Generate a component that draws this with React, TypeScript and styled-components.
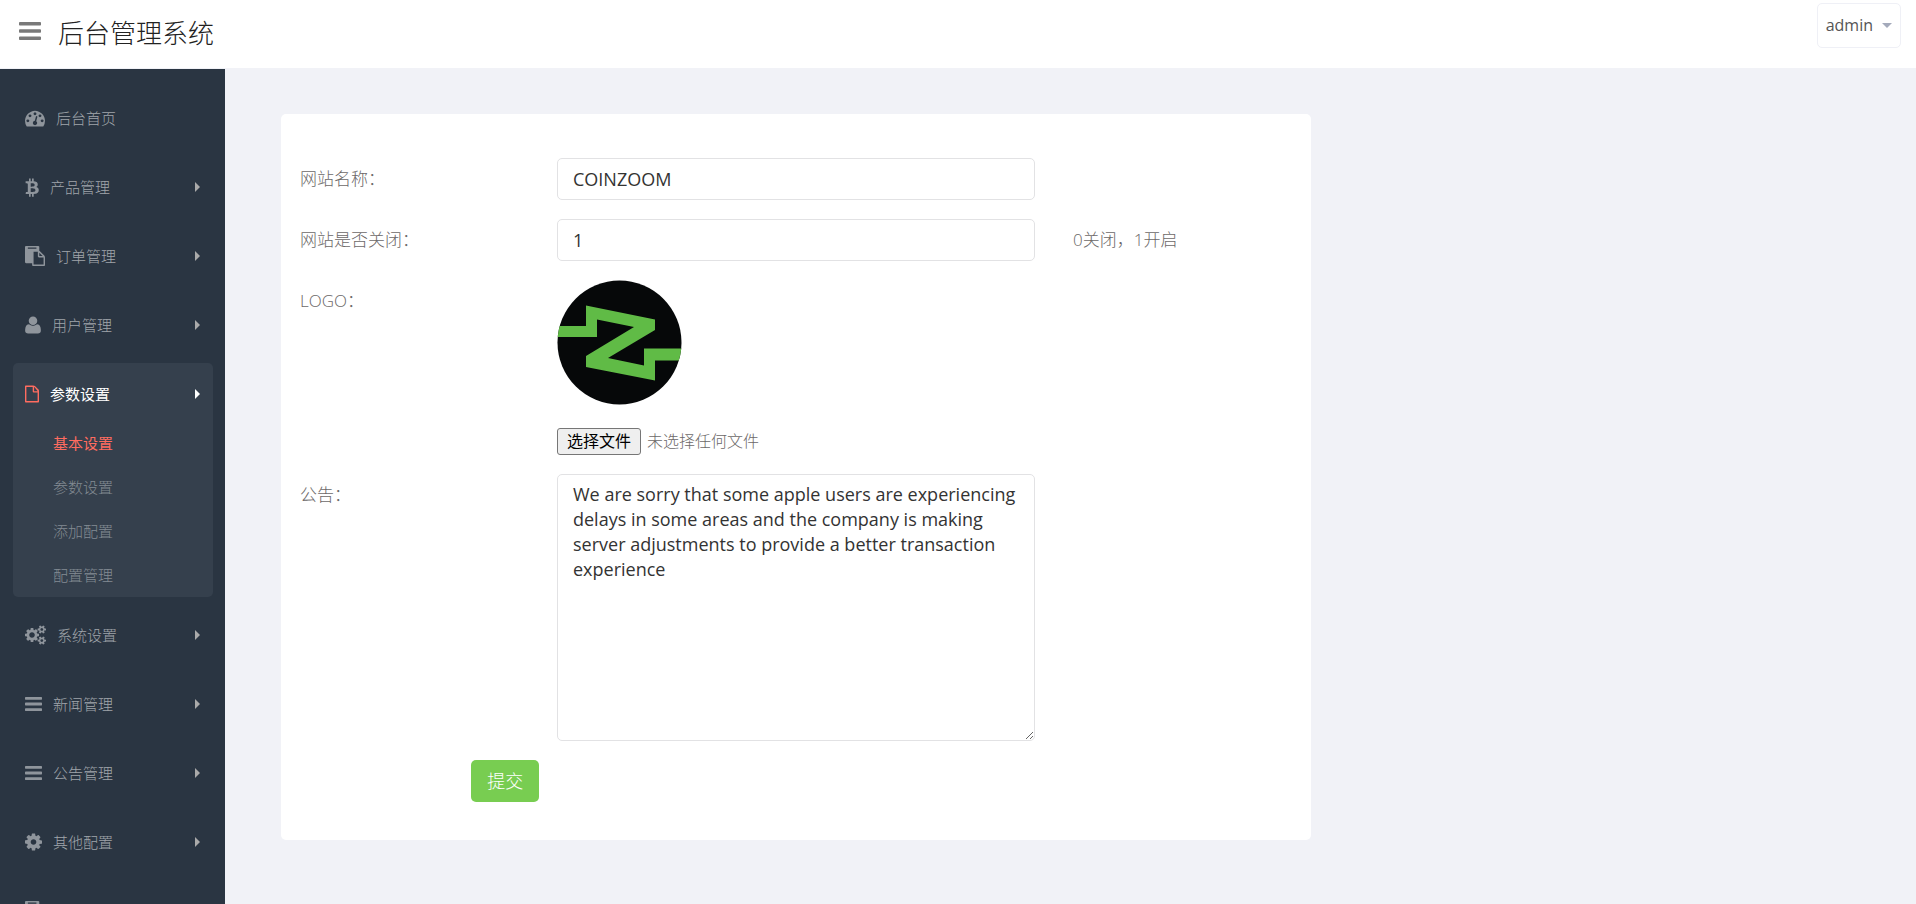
import React, { useState } from "react";
import styled, { createGlobalStyle, css } from "styled-components";

const GlobalStyle = createGlobalStyle`
  *, *::before, *::after { box-sizing: border-box; }
  body {
    margin: 0;
    background: #f1f2f7;
    color: #6c6868;
    font-family: "Open Sans", "Noto Sans CJK SC", sans-serif;
    font-size: 17px;
    line-height: 25px;
  }
  input, textarea, button { font: inherit; }
`;

type Glyph = { box: string; width: number; path: string };

const BARS_PATH =
  "M1664 1344v128q0 26-19 45t-45 19h-1408q-26 0-45-19t-19-45v-128q0-26 19-45t45-19h1408q26 0 45 19t19 45zm0-512v128q0 26-19 45t-45 19h-1408q-26 0-45-19t-19-45v-128q0-26 19-45t45-19h1408q26 0 45 19t19 45zm0-512v128q0 26-19 45t-45 19h-1408q-26 0-45-19t-19-45v-128q0-26 19-45t45-19h1408q26 0 45 19t19 45z";

const glyphs: Record<string, Glyph> = {
  dashboard: {
    box: "0 0 1792 1792",
    width: 20,
    path: "M384 1152q0-53-37.5-90.5t-90.5-37.5-90.5 37.5-37.5 90.5 37.5 90.5 90.5 37.5 90.5-37.5 37.5-90.5zm192-448q0-53-37.5-90.5t-90.5-37.5-90.5 37.5-37.5 90.5 37.5 90.5 90.5 37.5 90.5-37.5 37.5-90.5zm428 481l101-382q6-26-7.5-48.5t-38.5-29.5-48 6.5-30 39.5l-101 382q-60 5-107 43.5t-63 98.5q-20 77 20 146t117 89 146-20 89-117q16-60-6-117t-72-91zm660-33q0-53-37.5-90.5t-90.5-37.5-90.5 37.5-37.5 90.5 37.5 90.5 90.5 37.5 90.5-37.5 37.5-90.5zm-640-640q0-53-37.5-90.5t-90.5-37.5-90.5 37.5-37.5 90.5 37.5 90.5 90.5 37.5 90.5-37.5 37.5-90.5zm448 192q0-53-37.5-90.5t-90.5-37.5-90.5 37.5-37.5 90.5 37.5 90.5 90.5 37.5 90.5-37.5 37.5-90.5zm320 448q0 261-141 483-19 29-54 29h-1402q-35 0-54-29-141-221-141-483 0-182 71-348t191-286 286-191 348-71 348 71 286 191 191 286 71 348z",
  },
  bitcoin: {
    box: "0 0 1280 1792",
    width: 14,
    path: "M1167 640q18 182-131 258 117 28 175 103t45 214q-7 71-32.5 125t-64.5 89-97 58.5-121.5 34.5-145.5 15v255h-154v-251q-80 0-122-1v252h-154v-255q-18 0-54-.5t-55-.5h-200l31-183h111q50 0 58-51v-402h16q-6-1-16-1v-287q-13-68-89-68h-111v-164l212 1q64 0 97-1v-252h154v247q82-2 122-2v-245h154v252q79 7 140 22.5t113 45 82.5 78 36.5 114.5zm-215 545q0-36-15-64t-37-46-57.5-30.5-65.5-18.5-74-9-69-3-64.5 1-47.5 1v338q8 0 37 .5t48 .5 53-1.5 58.5-4 57-8.5 55.5-14 47.5-21 39.5-30 24.5-40 9.5-51zm-71-476q0-33-12.5-58.5t-30.5-42-48-28-55-16.5-61.5-8-58-2.5-54 1-39.5.5v307q5 0 34.5.5t46.5 0 50-2 55-5.5 51.5-11 48.5-18.5 37-27 27-38.5 9-51z",
  },
  paste: {
    box: "0 0 1792 1792",
    width: 20,
    path: "M768 1664h896v-640h-416q-40 0-68-28t-28-68v-416h-384v1152zm256-1440v-64q0-13-9.5-22.5t-22.5-9.5h-704q-13 0-22.5 9.5t-9.5 22.5v64q0 13 9.5 22.5t22.5 9.5h704q13 0 22.5-9.5t9.5-22.5zm256 672h299l-299-299v299zm512 128v672q0 40-28 68t-68 28h-960q-40 0-68-28t-28-68v-160h-544q-40 0-68-28t-28-68v-1344q0-40 28-68t68-28h1088q40 0 68 28t28 68v328q21 13 36 28l408 408q28 28 48 76t20 88z",
  },
  user: {
    box: "192 0 1408 1792",
    width: 16,
    path: "M1600 1405q0 120-73 189.500t-194 69.500h-874q-121 0-194-69.500t-73-189.500q0-53 3.500-103.500t14-109 26.500-108.500 43-97.500 62-81 85.500-53.500 111.500-20q9 0 42 21.500t74.500 48 108 48 133.500 21.500 133.500-21.500 108-48 74.500-48 42-21.500q61 0 111.500 20t85.500 53.500 62 81 43 97.500 26.500 108.500 14 109 3.500 103.500zm-320-893q0 159-112.500 271.500t-271.500 112.500-271.500-112.500-112.500-271.500 112.500-271.500 271.500-112.500 271.500 112.500 112.500 271.500z",
  },
  file: {
    box: "0 0 1280 1792",
    width: 14,
    path: "M1160 412q28 28 74 74t46 110v1004q0 64-64 64h-1152q-64 0-64-64v-1408q0-64 64-64h672q70 0 116 20t84 40zM832 256v384h320q-10-30-24-44l-252-316q-14-14-44-24zM1152 1536v-768h-352q-96 0-96-96v-416h-576v1280z",
  },
  cogs: {
    box: "0 0 1920 1792",
    width: 21,
    path: "M896 896q0-106-75-181t-181-75-181 75-75 181 75 181 181 75 181-75 75-181zm768 512q0-52-38-90t-90-38-90 38-38 90q0 53 37.5 90.5t90.5 37.5 90.5-37.5 37.5-90.5zm0-1024q0-52-38-90t-90-38-90 38-38 90q0 53 37.5 90.5t90.5 37.5 90.5-37.5 37.5-90.5zm-384 421v185q0 10-7 19.500t-16 10.500l-155 24q-11 35-32 76 34 48 90 115 7 11 7 20 0 12-7 19-23 30-82.500 89.500t-78.500 59.500q-11 0-21-7l-115-90q-37 19-77 31-11 108-23 155-7 24-30 24h-186q-11 0-20-7.500t-10-17.500l-23-153q-34-10-75-31l-118 89q-7 7-20 7-11 0-21-8-144-133-144-160 0-9 7-19 10-14 41-53t47-61q-23-44-35-82l-152-24q-10-1-17-9.500t-7-19.500v-185q0-10 7-19.500t16-10.500l155-24q11-35 32-76-34-48-90-115-7-11-7-20 0-12 7-20 22-30 82-89t79-59q11 0 21 7l115 90q34-18 77-32 11-108 23-154 7-24 30-24h186q11 0 20 7.500t10 17.500l23 153q34 10 75 31l118-89q8-7 20-7 11 0 21 8 144 133 144 160 0 8-7 19-12 16-42 54t-45 60q23 48 34 82l152 23q10 2 17 10.500t7 19.500zm640 533v140q0 16-149 31-12 27-30 52 51 113 51 138 0 4-4 7-122 71-124 71-8 0-46-47t-52-68q-20 2-30 2t-30-2q-14 21-52 68t-46 47q-2 0-124-71-4-3-4-7 0-25 51-138-18-25-30-52-149-15-149-31v-140q0-16 149-31 13-29 30-52-51-113-51-138 0-4 4-7 4-2 35-20t59-34 30-16q8 0 46 46.500t52 67.500q20-2 30-2t30 2q51-71 92-112l6-2q4 0 124 70 4 3 4 7 0 25-51 138 17 23 30 52 149 15 149 31zm0-1024v140q0 16-149 31-12 27-30 52 51 113 51 138 0 4-4 7-122 71-124 71-8 0-46-47t-52-68q-20 2-30 2t-30-2q-14 21-52 68t-46 47q-2 0-124-71-4-3-4-7 0-25 51-138-18-25-30-52-149-15-149-31v-140q0-16 149-31 13-29 30-52-51-113-51-138 0-4 4-7 4-2 35-20t59-34 30-16q8 0 46 46.500t52 67.500q20-2 30-2t30 2q51-71 92-112l6-2q4 0 124 70 4 3 4 7 0 25-51 138 17 23 30 52 149 15 149 31z",
  },
  bars: { box: "128 0 1536 1792", width: 17, path: BARS_PATH },
  cog: {
    box: "128 0 1536 1792",
    width: 17,
    path: "M1152 896q0-106-75-181t-181-75-181 75-75 181 75 181 181 75 181-75 75-181zm512-109v222q0 12-8 23t-20 13l-185 28q-19 54-39 91 35 50 107 138 10 12 10 25t-9 23q-27 37-99 108t-94 71q-12 0-26-9l-138-108q-44 23-91 38-16 136-29 186-7 28-36 28h-222q-14 0-24.500-8.500t-11.500-21.500l-28-184q-49-16-90-37l-141 107q-10 9-25 9-14 0-25-11-126-114-165-168-7-10-7-23 0-12 8-23 15-21 51-66.500t54-70.500q-27-50-41-99l-183-27q-13-2-21-12.500t-8-23.500v-222q0-12 8-23t19-13l186-28q14-46 39-92-40-57-107-138-10-12-10-24 0-10 9-23 26-36 98.500-107.500t94.500-71.500q13 0 26 10l138 107q44-23 91-38 16-136 29-186 7-28 36-28h222q14 0 24.500 8.500t11.500 21.500l28 184q49 16 90 37l142-107q9-9 24-9 13 0 25 10 129 119 165 170 7 8 7 22 0 12-8 23-15 21-51 66.500t-54 70.500q26 50 41 98l183 28q13 2 21 12.500t8 23.500z",
  },
};

const Page = styled.div`
  display: flex;
  flex-direction: column;
  height: 100vh;
  overflow: hidden;
`;

const Header = styled.header`
  display: flex;
  justify-content: space-between;
  align-items: flex-start;
  flex: none;
  height: 69px;
  padding: 0 15px 0 19px;
  background: #fff;
  border-bottom: 1px solid #f1f2f7;
`;

const Brand = styled.div`
  display: flex;
  align-items: center;
  gap: 17px;
  height: 66px;
`;

const MenuToggle = styled.button`
  display: flex;
  padding: 0 0 4px;
  border: 0;
  background: none;
  color: #797979;
  cursor: pointer;
`;

const Title = styled.h1`
  margin: 0;
  color: #222;
  font-size: 26px;
  font-weight: 300;
  line-height: 36px;
`;

const AccountButton = styled.button`
  display: flex;
  align-items: center;
  gap: 9px;
  height: 45px;
  margin-top: 3px;
  padding: 0 8px;
  border: 1px solid #eff0f6;
  border-radius: 5px;
  background: #fff;
  color: #555;
  font-size: 16px;
  cursor: pointer;
`;

const CaretDown = styled.span`
  border: 5px solid transparent;
  border-top-color: #a4aabb;
  border-bottom-width: 0;
`;

const Body = styled.div`
  display: flex;
  flex: 1;
  min-height: 0;
`;

const Sidebar = styled.nav`
  flex: none;
  width: 225px;
  padding: 18px 12px 0 13px;
  overflow: hidden;
  background: #2a3542;
`;

const Menu = styled.ul`
  display: flex;
  flex-direction: column;
  gap: 7px;
  margin: 0;
  padding: 0;
  list-style: none;
`;

const MenuItem = styled.li<{ $active?: boolean }>`
  border-radius: 5px;
  background: ${(p) => (p.$active ? "#35404d" : "transparent")};
`;

const MenuLink = styled.a<{ $active?: boolean }>`
  display: flex;
  align-items: center;
  gap: 11px;
  height: 62px;
  padding: 0 13px 0 12px;
  color: #a0a5ab;
  font-size: 15px;
  font-weight: 300;
  text-decoration: none;
  svg { color: #8f959c; }
  ${(p) =>
    p.$active &&
    css`
      color: #fff;
      font-weight: 400;
      svg { color: #ff6c60; }
    `}
`;

const CaretRight = styled.span<{ $active?: boolean }>`
  margin-left: auto;
  border: 5px solid transparent;
  border-left-color: ${(p) => (p.$active ? "#fff" : "#aaa")};
  border-right-width: 0;
`;

const SubMenu = styled.ul`
  display: flex;
  flex-direction: column;
  gap: 8px;
  margin: 0;
  padding: 0 0 4px 40px;
  list-style: none;
`;

const SubLink = styled.a<{ $active?: boolean }>`
  display: block;
  color: ${(p) => (p.$active ? "#ff6c60" : "#838b93")};
  font-size: 15px;
  font-weight: ${(p) => (p.$active ? 400 : 300)};
  line-height: 36px;
  text-decoration: none;
`;

const Main = styled.main`
  display: grid;
  grid-template-columns: 2fr 1fr;
  gap: 34px;
  align-items: start;
  flex: 1;
  padding: 45px 56px;
  overflow: auto;
`;

const Card = styled.form`
  display: flex;
  flex-direction: column;
  gap: 19px;
  padding: 44px 1px 38px;
  border-radius: 5px;
  background: #fff;
`;

const Row = styled.div`
  display: grid;
  grid-template-columns: 1fr 2fr 1fr;
`;

const ActionRow = styled.div`
  display: grid;
  grid-template-columns: 1fr 5fr;
`;

const Cell = styled.div`
  padding: 0 18px;
`;

const FieldLabel = styled.label`
  padding: 8px 18px 0;
  font-weight: 300;
`;

const Hint = styled.p`
  margin: 0;
  padding: 8px 20px 0;
  font-weight: 300;
`;

const fieldStyle = css`
  display: block;
  width: 100%;
  border: 1px solid #e2e2e4;
  border-radius: 5px;
  background: #fff;
  color: #333;
  font-size: 18px;
  outline: none;
`;

const TextInput = styled.input`
  ${fieldStyle}
  height: 42px;
  padding: 0 15px;
`;

const TextArea = styled.textarea`
  ${fieldStyle}
  height: 267px;
  padding: 7px 15px;
  resize: both;
`;

const LogoCell = styled(Cell)`
  display: flex;
  flex-direction: column;
  align-items: flex-start;
  gap: 23px;
`;

const FilePicker = styled.label`
  display: flex;
  align-items: center;
  gap: 6px;
  font-size: 16px;
  font-weight: 300;
`;

const HiddenFileInput = styled.input`
  position: absolute;
  width: 1px;
  height: 1px;
  opacity: 0;
`;

const FileButton = styled.span`
  padding: 0 9px;
  border: 1px solid #767676;
  border-radius: 3px;
  background: #efefef;
  color: #000;
  font-weight: 400;
  line-height: 25px;
`;

const SubmitButton = styled.button`
  height: 42px;
  padding: 0 16px;
  border: 0;
  border-radius: 5px;
  background: #78cd51;
  color: #fff;
  font-size: 18px;
  font-weight: 300;
  cursor: pointer;
`;

function Icon({ name }: { name: string }) {
  const g = glyphs[name];
  return (
    <svg width={g.width} height={20} viewBox={g.box} fill="currentColor" aria-hidden="true">
      <path fillRule={name === "file" ? "evenodd" : "nonzero"} d={g.path} />
    </svg>
  );
}

function CoinLogo() {
  return (
    <svg width="125" height="125" viewBox="0 0 125 125" role="img" aria-label="COINZOOM">
      <defs>
        <clipPath id="disc">
          <circle cx="62.500" cy="62.500" r="62" />
        </clipPath>
      </defs>
      <circle cx="62.500" cy="62.500" r="62" fill="#060809" />
      <g clipPath="url(#disc)" fill="#60bb46">
        <path d="M0 46H29V25.500L98 39.500V50L51 78L87 85.500V68.500H125V80.500H98V100.500L29 87V76L77 47L40 39.500V57H0Z" />
      </g>
    </svg>
  );
}

type Entry = { icon: string; label: string; leaf?: boolean; children?: string[] };

const entries: Entry[] = [
  { icon: "dashboard", label: "后台首页", leaf: true },
  { icon: "bitcoin", label: "产品管理" },
  { icon: "paste", label: "订单管理" },
  { icon: "user", label: "用户管理" },
  { icon: "file", label: "参数设置", children: ["基本设置", "参数设置", "添加配置", "配置管理"] },
  { icon: "cogs", label: "系统设置" },
  { icon: "bars", label: "新闻管理" },
  { icon: "bars", label: "公告管理" },
  { icon: "cog", label: "其他配置" },
  { icon: "paste", label: "文章管理" },
];

export default function App() {
  const [fileName, setFileName] = useState("未选择任何文件");
  return (
    <Page>
      <GlobalStyle />
      <Header>
        <Brand>
          <MenuToggle type="button" aria-label="菜单">
            <svg width="22" height="18" viewBox="128 256 1536 1280" preserveAspectRatio="none" fill="currentColor">
              <path d={BARS_PATH} />
            </svg>
          </MenuToggle>
          <Title>后台管理系统</Title>
        </Brand>
        <AccountButton type="button">
          admin
          <CaretDown />
        </AccountButton>
      </Header>
      <Body>
        <Sidebar>
          <Menu>
            {entries.map((e) => {
              const active = !!e.children;
              return (
                <MenuItem key={e.label} $active={active}>
                  <MenuLink href="#" $active={active}>
                    <Icon name={e.icon} />
                    {e.label}
                    {!e.leaf && <CaretRight $active={active} />}
                  </MenuLink>
                  {e.children && (
                    <SubMenu>
                      {e.children.map((c, i) => (
                        <li key={c}>
                          <SubLink href="#" $active={i === 0}>
                            {c}
                          </SubLink>
                        </li>
                      ))}
                    </SubMenu>
                  )}
                </MenuItem>
              );
            })}
          </Menu>
        </Sidebar>
        <Main>
          <Card onSubmit={(e) => e.preventDefault()}>
            <Row>
              <FieldLabel htmlFor="site-name">网站名称：</FieldLabel>
              <Cell>
                <TextInput id="site-name" defaultValue="COINZOOM" />
              </Cell>
            </Row>
            <Row>
              <FieldLabel htmlFor="site-open">网站是否关闭：</FieldLabel>
              <Cell>
                <TextInput id="site-open" defaultValue="1" />
              </Cell>
              <Hint>0关闭，1开启</Hint>
            </Row>
            <Row>
              <FieldLabel htmlFor="site-logo">LOGO：</FieldLabel>
              <LogoCell>
                <CoinLogo />
                <FilePicker>
                  <HiddenFileInput
                    id="site-logo"
                    type="file"
                    onChange={(e) => setFileName(e.target.files?.[0]?.name ?? "未选择任何文件")}
                  />
                  <FileButton>选择文件</FileButton>
                  {fileName}
                </FilePicker>
              </LogoCell>
            </Row>
            <Row>
              <FieldLabel htmlFor="notice">公告：</FieldLabel>
              <Cell>
                <TextArea
                  id="notice"
                  defaultValue="We are sorry that some apple users are experiencing delays in some areas and the company is making server adjustments to provide a better transaction experience"
                />
              </Cell>
            </Row>
            <ActionRow>
              <span />
              <Cell>
                <SubmitButton type="submit">提交</SubmitButton>
              </Cell>
            </ActionRow>
          </Card>
        </Main>
      </Body>
    </Page>
  );
}
